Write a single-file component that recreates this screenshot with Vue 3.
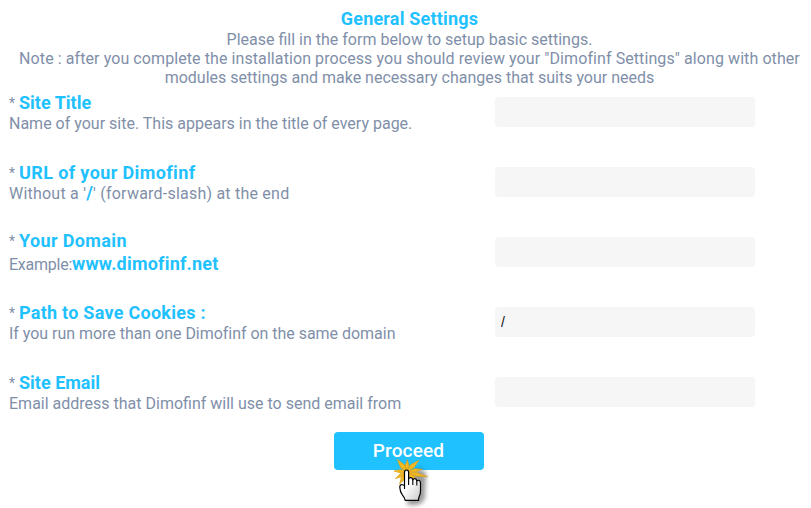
<script setup>
import { ref } from 'vue'

const fields = ref([
  { id: 'title', label: 'Site Title', value: '', parts: [{ text: 'Name of your site. This appears in the title of every page.' }] },
  { id: 'url', label: 'URL of your Dimofinf', value: '', parts: [{ text: "Without a '" }, { text: '/', slash: true }, { text: "' (forward-slash) at the end" }] },
  { id: 'domain', label: 'Your Domain', value: '', parts: [{ text: 'Example:' }, { text: 'www.dimofinf.net', strong: true }] },
  { id: 'cookies', label: 'Path to Save Cookies :', value: '/', parts: [{ text: 'If you run more than one Dimofinf on the same domain' }] },
  { id: 'email', label: 'Site Email', value: '', parts: [{ text: 'Email address that Dimofinf will use to send email from' }] },
])
</script>

<template>
  <form class="page" @submit.prevent>
    <header class="intro">
      <h1>General Settings</h1>
      <p>Please fill in the form below to setup basic settings.</p>
      <p class="note">Note : after you complete the installation process you should review your "Dimofinf Settings" along with other</p>
      <p>modules settings and make necessary changes that suits your needs</p>
    </header>
    <div v-for="f in fields" :key="f.id" class="row" :class="f.id">
      <div class="info">
        <label :for="f.id"><span class="star">*</span><b>{{ f.label }}</b></label>
        <p><span v-for="(p, i) in f.parts" :key="i" :class="{ strong: p.strong, slash: p.slash }">{{ p.text }}</span></p>
      </div>
      <input :id="f.id" v-model="f.value" type="text" />
    </div>
    <div class="actions">
      <button type="submit">Proceed</button>
      <svg class="pointer" viewBox="0 0 50 58" width="50" height="58">
        <defs>
          <filter id="soft" x="-40%" y="-40%" width="180%" height="180%"><feGaussianBlur stdDeviation="1.9" /></filter>
          <linearGradient id="skin" x1="0" y1="0" x2="1" y2="1">
            <stop offset=".45" stop-color="#fff" /><stop offset="1" stop-color="#c8c8c8" />
          </linearGradient>
        </defs>
        <path d="M26 24L34 18L41 23L40 48Q37 55 31 55H22Z" fill="#222" opacity=".45" filter="url(#soft)" />
        <g fill="#f3b91e" stroke="#d3a11b" stroke-width=".7" stroke-linejoin="round">
          <path d="M12.300 9.300L20.200 15.500L22 22L15.500 17.500Z" />
          <path d="M22.300 9.700L24.200 16L22 22L20 16Z" />
          <path d="M34 10.300L29 17.500L22 22L25.500 14.800Z" />
          <path d="M37.300 19.300L30 22L22 22L29.500 18.800Z" />
          <path d="M42.700 26.700L31 26L22 22L32 22.800Z" />
          <path d="M9 21L16 19.500L22 22L15.500 23Z" />
          <path d="M10.500 28.500L15 24L22 22L17.500 26.500Z" />
          <path d="M14.500 34L16.500 27L22 22L20 29Z" />
          <path d="M32 31L25.500 28L22 22L29 26Z" />
        </g>
        <path d="M19.500 36V22.200Q19.500 20 21.500 20Q23.600 20 23.600 22.200V29Q24.200 27.600 25.700 27.700Q27.600 27.800 27.800 30Q28.600 28.500 30 28.700Q31.700 29 31.800 31Q33 29.800 34.300 30.500Q35.500 31.200 35.500 33V41Q35.500 44 34.200 46.500Q33.500 48 33.500 50.300H20.200Q19.500 47.500 17.500 45.200Q15 42 14.800 37.500Q14.700 34.600 16.800 34.500Q18.300 34.500 19.500 36Z" fill="url(#skin)" stroke="#000" stroke-width="1.200" stroke-linejoin="round" />
        <path d="M19.500 35.500V39M23.600 28.500V35M27.800 30V35M31.800 31V35.500" fill="none" stroke="#000" stroke-width="1.100" />
      </svg>
    </div>
  </form>
</template>

<style>
body { background: #fff; }
</style>

<style scoped>
.page { box-sizing: border-box; width: 811px; height: 508px; padding: 9px 8px 0 9px; overflow: hidden; font-family: Roboto, "Liberation Sans", sans-serif; font-size: 16px; color: #7f8fa9; }
p, h1 { margin: 0; white-space: nowrap; }
.intro { display: flex; flex-direction: column; align-items: center; height: 84px; padding-left: 7px; }
.intro p { line-height: 19px; }
.intro .note { letter-spacing: .085px; }
h1 { height: 21px; font-size: 18px; line-height: 20px; letter-spacing: .19px; color: #1fc1ff; }
.row { display: flex; justify-content: space-between; height: 70px; padding-right: 48px; }
.info { display: flex; flex-direction: column; }
label { display: flex; height: 21px; line-height: 20px; white-space: nowrap; }
.star { width: 10px; font-size: 14px; }
b, .strong { font-size: 18px; font-weight: 700; color: #1fc1ff; }
.info p { line-height: 20px; }
.slash { color: #1fc1ff; font-size: 18px; line-height: 1; font-weight: 700; }
.url b { letter-spacing: .38px; }
.url p { letter-spacing: .22px; }
.domain label { margin-top: -2px; height: 23px; }
.domain b { letter-spacing: .37px; }
.domain p { letter-spacing: -.25px; }
.domain .strong { letter-spacing: .2px; }
.cookies b { letter-spacing: .26px; }
.cookies p { letter-spacing: -.03px; }
input { box-sizing: border-box; width: 260px; height: 30px; margin: 4px 0 0; padding: 1px 6px; border: 0; border-radius: 4px; background: #f6f6f6; color: #111; font: 14px "Liberation Sans", sans-serif; outline: none; }
.actions { position: relative; display: flex; justify-content: center; margin-top: -11px; padding-left: 8px; }
button { width: 150px; height: 38px; margin-right: 3px; padding: 0; border: 0; border-radius: 4px; background: #1fc1ff; color: #fff; font: 500 19px/38px Roboto, sans-serif; letter-spacing: .15px; }
.pointer { position: absolute; left: 376px; top: 18px; }
</style>
